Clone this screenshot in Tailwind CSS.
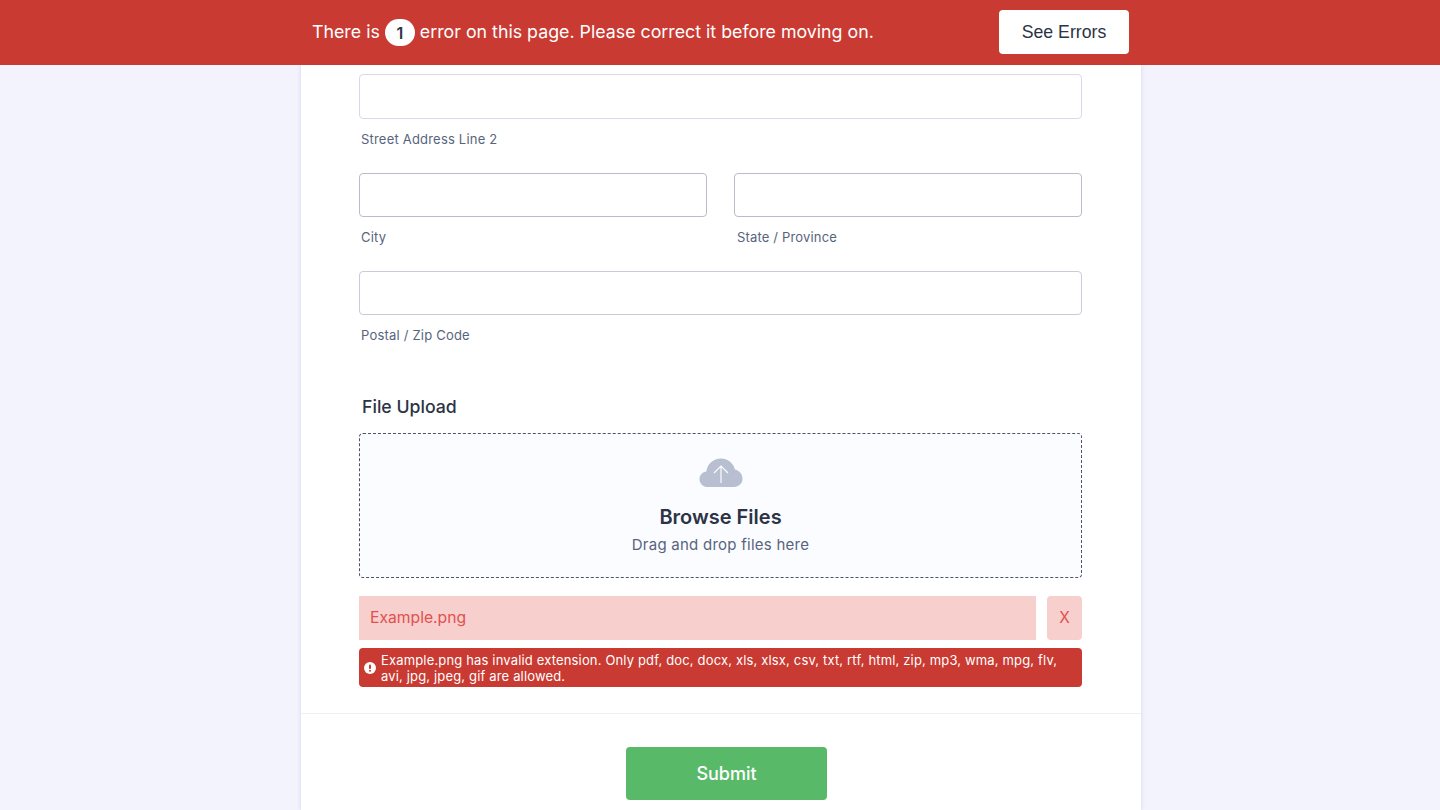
<!DOCTYPE html>
<html lang="en">
<head>
  <meta charset="UTF-8" />
  <title>Form errors</title>
  <script src="https://cdn.jsdelivr.net/npm/@tailwindcss/browser@4"></script>
</head>
<body class="h-[810px] overflow-hidden bg-[#f3f3fe] font-['Inter',sans-serif] text-[#2c3345]">
  <!-- Error bar -->
  <div class="relative z-10 flex h-[65px] items-start bg-[#c93a32] pt-[10px] pl-[312px]">
    <p class="flex h-[45px] w-[687px] items-center text-[17.8px] text-white">
      There is
      <span class="mx-[5px] flex h-[27px] w-[30px] items-center justify-center rounded-full bg-white text-[16px] font-semibold text-[#2c3345]">1</span>
      error on this page. Please correct it before moving on.
    </p>
    <button class="h-[44px] w-[130px] rounded-[4px] bg-white font-['Liberation_Sans',sans-serif] text-[17.7px] text-[#2c3345]">See Errors</button>
  </div>

  <!-- Form card -->
  <main class="ml-[301px] h-[745px] w-[840px] bg-white pt-[9px] shadow-[0_0_4px_rgba(87,79,160,0.2)]">
    <div class="pr-[59px] pl-[58px]">
      <input class="block h-[45px] w-full rounded-[4px] border border-[#d8dae9]" />
      <p class="mt-[12px] ml-[2px] text-[13px] leading-[16px] tracking-[0.2px] text-[#57647e]">Street Address Line 2</p>

      <div class="mt-[26px] grid grid-cols-2 gap-x-[27px]">
        <div>
          <input class="block h-[44px] w-full rounded-[4px] border border-[#b8bdc9]" />
          <p class="mt-[12px] ml-[2px] text-[13px] leading-[16px] tracking-[0.2px] text-[#57647e]">City</p>
        </div>
        <div>
          <input class="block h-[44px] w-full rounded-[4px] border border-[#b8bdc9]" />
          <p class="mt-[12px] ml-[3px] text-[13px] leading-[16px] tracking-[0.17px] text-[#57647e]">State / Province</p>
        </div>
      </div>

      <input class="mt-[26px] block h-[44px] w-full rounded-[4px] border border-[#c8cbd8]" />
      <p class="mt-[12px] ml-[2px] text-[13px] leading-[16px] tracking-[0.2px] text-[#57647e]">Postal / Zip Code</p>

      <h2 class="mt-[52px] ml-[3px] text-[17.7px] leading-[24px] font-medium">File Upload</h2>

      <!-- Drop zone -->
      <div class="mt-[14px] flex h-[145px] flex-col items-center rounded-[4px] border border-dashed border-[#4b5468] bg-[#fbfcff] pt-[24px]">
        <svg class="h-[29px] w-[44px]" viewBox="0 0 44 29">
          <path fill="#b8bfd0" d="M9 29C4 29 0.5 25.5 0.5 21.2C0.5 17.2 3.5 14 7.4 13.6C8.2 6 14.4 0.5 21.8 0.5C28.6 0.5 34.4 5 36 11.6C40.4 12.6 43.5 16.4 43.5 20.8C43.5 25.5 39.8 29 35 29Z" />
          <path fill="none" stroke="#fbfcff" stroke-width="1.2" d="M22 25V8M15 15L22 8L29 15" />
        </svg>
        <p class="mt-[16px] text-[20px] leading-[28px] font-semibold">Browse Files</p>
        <p class="mt-[2px] text-[15px] leading-[24px] tracking-[0.25px] text-[#57647e]">Drag and drop files here</p>
      </div>

      <!-- Rejected file -->
      <div class="mt-[18px] flex h-[44px] justify-between">
        <div class="flex w-[677px] items-center bg-[#f7cfcd] pl-[11px] text-[15.7px] text-[#e2504f]">Example.png</div>
        <div class="flex w-[35px] items-center justify-center rounded-[4px] bg-[#f7cfcd] text-[15.5px] text-[#e2504f]">X</div>
      </div>

      <div class="mt-[8px] flex h-[39px] items-center rounded-[4px] bg-[#c93a32] pl-[5px] text-white">
        <svg class="h-[12px] w-[12px] shrink-0" viewBox="0 0 12 12">
          <circle cx="6" cy="6" r="6" fill="#fff" />
          <rect x="5" y="2.5" width="2" height="4.5" rx="1" fill="#c93a32" />
          <circle cx="6" cy="8.8" r="1" fill="#c93a32" />
        </svg>
        <p class="ml-[5px] text-[13px] leading-[16px] tracking-[0.16px]">Example.png has invalid extension. Only pdf, doc, docx, xls, xlsx, csv, txt, rtf, html, zip, mp3, wma, mpg, flv, avi, jpg, jpeg, gif are allowed.</p>
      </div>
    </div>

    <!-- Footer -->
    <div class="mt-[26px] border-t border-[#f0f0f4] pt-[33px]">
      <button class="ml-[325px] block h-[53px] w-[201px] rounded-[4px] bg-[#58ba68] text-[18px] font-medium text-white">Submit</button>
    </div>
  </main>
</body>
</html>
